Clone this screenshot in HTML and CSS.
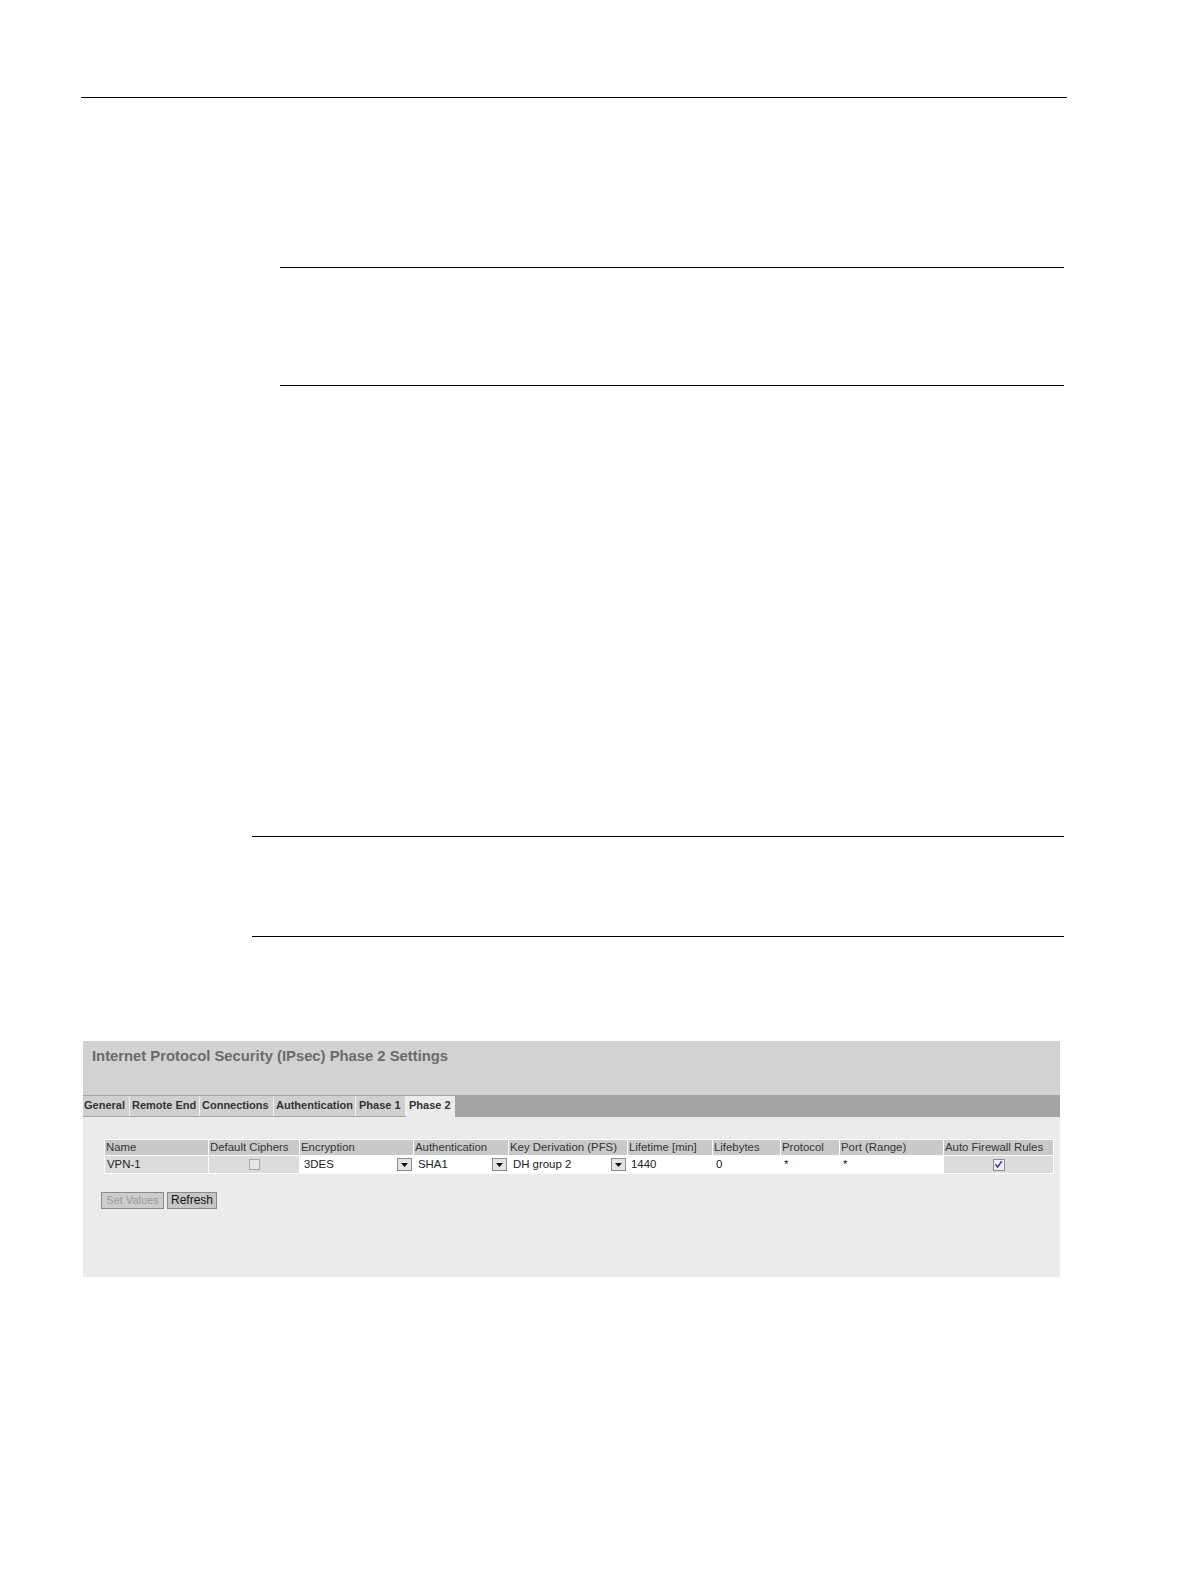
FILE: index.html
```html
<!DOCTYPE html>
<html>
<head>
<meta charset="utf-8">
<link rel="stylesheet" href="styles.css">
</head>
<body>
<div class="page">
  <div class="rule-top"></div>
  <div class="note note-a"></div>
  <div class="note note-b"></div>
  <div class="panel">
    <div class="panel-head">Internet Protocol Security (IPsec) Phase 2 Settings</div>
    <div class="tabs">
      <div class="tab t1">General</div>
      <div class="tab t2">Remote End</div>
      <div class="tab t3">Connections</div>
      <div class="tab t4">Authentication</div>
      <div class="tab t5">Phase 1</div>
      <div class="tab t6 active">Phase 2</div>
    </div>
    <div class="panel-body">
      <div class="grid">
        <div class="th">Name</div>
        <div class="th">Default Ciphers</div>
        <div class="th">Encryption</div>
        <div class="th">Authentication</div>
        <div class="th">Key Derivation (PFS)</div>
        <div class="th">Lifetime [min]</div>
        <div class="th">Lifebytes</div>
        <div class="th">Protocol</div>
        <div class="th">Port (Range)</div>
        <div class="th">Auto Firewall Rules</div>

        <div class="td gray name">VPN-1</div>
        <div class="td gray center"><span class="cb"></span></div>
        <div class="td sel"><span class="val">3DES</span><span class="drop"><svg width="7" height="4" viewBox="0 0 7 4"><path d="M0 0h7L3.5 4z" fill="#111"/></svg></span></div>
        <div class="td sel"><span class="val">SHA1</span><span class="drop"><svg width="7" height="4" viewBox="0 0 7 4"><path d="M0 0h7L3.5 4z" fill="#111"/></svg></span></div>
        <div class="td sel"><span class="val">DH group 2</span><span class="drop"><svg width="7" height="4" viewBox="0 0 7 4"><path d="M0 0h7L3.5 4z" fill="#111"/></svg></span></div>
        <div class="td inp">1440</div>
        <div class="td inp">0</div>
        <div class="td inp">*</div>
        <div class="td inp">*</div>
        <div class="td gray center"><span class="cb checked"><svg width="9" height="9" viewBox="0 0 9 9"><path d="M1.5 4.2 L3.6 7.2 L7.6 1.2" fill="none" stroke="#3a4aa0" stroke-width="1.6"/></svg></span></div>
      </div>
      <div class="buttons">
        <span class="btn disabled">Set Values</span>
        <span class="btn">Refresh</span>
      </div>
    </div>
  </div>
</div>
</body>
</html>
```

FILE: styles.css
```css
html, body {
  margin: 0;
  padding: 0;
  background: #ffffff;
}
.page {
  padding-top: 97px;
  font-family: "Liberation Sans", Arial, sans-serif;
}
.rule-top {
  margin-left: 81px;
  width: 986px;
  height: 1px;
  background: #000;
}
.note {
  border-top: 1px solid #000;
  border-bottom: 1px solid #000;
}
.note-a {
  margin-left: 280px;
  width: 784px;
  margin-top: 169px;
  height: 117px;
}
.note-b {
  margin-left: 252px;
  width: 812px;
  margin-top: 450px;
  height: 99px;
}
.panel {
  margin-left: 83px;
  width: 977px;
  margin-top: 104px;
  height: 236px;
  background: #ebebeb;
  display: flex;
  flex-direction: column;
}
.panel-head {
  height: 54px;
  box-sizing: border-box;
  background: #d2d2d2;
  padding: 7px 0 0 9px;
  font-size: 14.8px;
  font-weight: bold;
  color: #6b6b6b;
}
.tabs {
  height: 22px;
  background: #a4a4a4;
  display: flex;
}
.tab {
  height: 20px;
  box-sizing: border-box;
  padding: 3px 0 0 1px;
  background: #d0d0d0;
  border-right: 1px solid #f0f0f0;
  font-size: 11px;
  font-weight: bold;
  color: #333;
  margin-top: 1px;
  white-space: nowrap;
}
.t1 { width: 47px; }
.t2 { width: 70px; padding-left: 2px; }
.t3 { width: 74px; padding-left: 2px; }
.t4 { width: 82px; padding-left: 2px; }
.t5 { width: 50px; padding-left: 3px; }
.t6 { width: 49px; padding-left: 3px; }
.tab.active {
  background: #ebebeb;
  height: 21px;
  border-right: none;
}
.panel-body {
  padding: 22px 0 0 21px;
  flex: 1;
}
.grid {
  display: grid;
  grid-template-columns: 103px 90px 113px 94px 118px 84px 67px 58px 103px 109px;
  gap: 1px;
  padding: 1px;
  background: #ffffff;
  width: max-content;
}
.th {
  height: 15px;
  background: #c9c9c9;
  font-size: 11.4px;
  color: #333;
  line-height: 15px;
  padding-left: 1px;
  white-space: nowrap;
  overflow: hidden;
}
.td {
  height: 17px;
  font-size: 11.4px;
  color: #222;
  line-height: 17px;
  box-sizing: border-box;
  white-space: nowrap;
  overflow: hidden;
}
.gray {
  background: #dcdcdc;
}
.name {
  padding-left: 2px;
}
.center {
  display: flex;
  justify-content: center;
  align-items: center;
}
.cb {
  width: 11px;
  height: 11px;
  box-sizing: border-box;
  border: 1px solid #a8a8a8;
  background: #e6e6e6;
  display: flex;
  align-items: center;
  justify-content: center;
}
.cb.checked {
  width: 12px;
  height: 12px;
  border-color: #8a8a9a;
  background: #eef0f6;
}
.sel {
  background: #fff;
  display: flex;
  align-items: center;
  padding-left: 4px;
  padding-right: 1px;
}
.sel .val {
  flex: 1;
}
.drop {
  width: 15px;
  height: 13px;
  box-sizing: border-box;
  border: 1px solid #8c8c8c;
  background: #e4e4e4;
  display: flex;
  align-items: center;
  justify-content: center;
  padding-top: 1px;
}
.inp {
  background: #fff;
  padding-left: 3px;
}
.buttons {
  margin: 18px 0 0 -3px;
  display: flex;
  gap: 3px;
}
.btn {
  height: 17px;
  box-sizing: border-box;
  border: 1px solid #8a8a8a;
  background: #c6c6c6;
  font-size: 12px;
  line-height: 15px;
  color: #111;
  white-space: nowrap;
  text-align: center;
}
.btn.disabled {
  color: #9a9a9a;
  background: #cdcdcd;
  font-size: 11px;
  width: 63px;
}
.btn:not(.disabled) {
  width: 50px;
}
```
